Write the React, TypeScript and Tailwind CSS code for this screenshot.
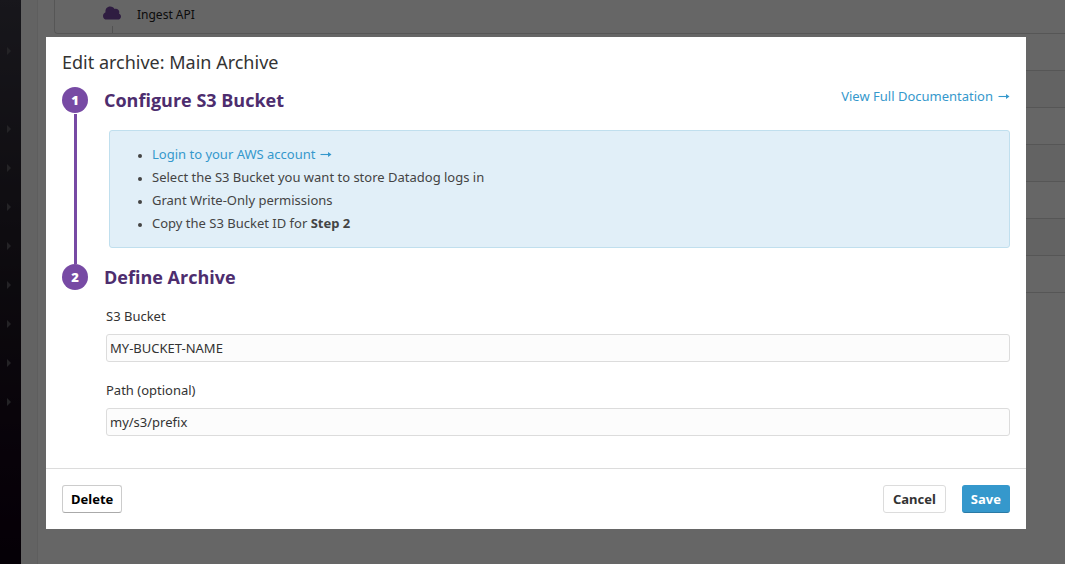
import React from 'react';

const navItems = [true, false, true, true, true, true, true, true, true, true];
const pipelineRows = [0, 1, 2, 3, 4, 5, 6];

function CloudIcon() {
  return (
    <svg className="w-[18px] h-[14px] shrink-0" viewBox="0 0 18 14" fill="#774aa4" aria-hidden="true">
      <path d="M4 13.6C1.5 13.6 0 12 0 9.9 0 8.2 1 6.9 2.5 6.2 2 2.8 4.2.4 7.2.4c2.1 0 3.6 1 4.4 2.5 2.2-.8 4.7.6 4.7 3 0 .6-.1 1-.4 1.5 1.3.5 2.1 1.6 2.1 3 0 1.9-1.4 3.2-3.3 3.2H4Z" />
    </svg>
  );
}

function Arrow() {
  return (
    <svg className="inline-block w-3 h-[9px] ml-[5px]" viewBox="0 0 12 9" fill="none" aria-hidden="true">
      <path d="M0.5 3.5H10" stroke="currentColor" strokeWidth="1.1" />
      <path d="M8 1L11.5 3.5 8 6Z" fill="currentColor" />
    </svg>
  );
}

function Backdrop() {
  return (
    <div className="flex min-h-screen bg-white" aria-hidden="true">
      <div className="w-[21px] shrink-0 pt-[31px] bg-linear-to-b from-[#3c3a46] via-[#201a24] to-[#0d0010]">
        {navItems.map((shown, i) => (
          <div key={i} className="flex h-[39px] items-center pl-[7px]">
            {shown && (
              <svg className="w-1 h-2" viewBox="0 0 4 8" fill="#5a5860">
                <path d="M0 0L4 4 0 8Z" />
              </svg>
            )}
          </div>
        ))}
      </div>
      <div className="w-[17px] shrink-0 border-r border-[#ececec] bg-[#f7f7f7]" />
      <div className="flex-1 pl-4">
        <div className="flex h-[34px] rounded-bl border-b border-l border-[#d8d8d8] pl-12">
          <div className="flex flex-col items-center">
            <div className="flex h-[26px] items-center">
              <CloudIcon />
            </div>
            <div className="w-px flex-1 bg-[#cccccc]" />
          </div>
          <span className="pt-[5px] pl-4 text-[12px] leading-5 text-[#222]">Ingest API</span>
        </div>
        {pipelineRows.map((i) => (
          <div key={i} className="h-[37px] border-b border-[#d8d8d8] even:bg-white odd:bg-[#f7f7f7]" />
        ))}
      </div>
    </div>
  );
}

function StepMarker({ n }: { n: number }) {
  return (
    <span className="flex size-[26px] shrink-0 items-center justify-center rounded-full bg-[#774aa4] pt-px font-['Open_Sans',sans-serif] text-[13px] font-extrabold text-white">
      {n}
    </span>
  );
}

function Field({ id, label, value }: { id: string; label: string; value: string }) {
  return (
    <div>
      <label htmlFor={id} className="block leading-5 text-[#333]">
        {label}
      </label>
      <input
        id={id}
        type="text"
        defaultValue={value}
        className="mt-2 block h-7 w-full rounded-[3px] border border-[#dcdcdc] bg-[#fcfcfc] px-[3px] text-[#333] outline-none"
      />
    </div>
  );
}

export default function App() {
  return (
    <div className="relative min-h-screen font-['Noto_Sans','Open_Sans',sans-serif] text-[13px]">
      <Backdrop />
      <div className="fixed inset-0 overflow-auto bg-black/60 pt-[37px] pr-[39px] pl-[46px]">
        <div role="dialog" aria-modal="true" aria-labelledby="title" className="bg-white">
          <div className="px-4 pt-3 pb-8">
            <h1 id="title" className="text-[18px] leading-[26px] text-[#333]">
              Edit archive: Main Archive
            </h1>

            <section className="mt-3 flex gap-4">
              <div className="flex flex-col items-center">
                <StepMarker n={1} />
                <div className="mt-px w-[3px] flex-1 bg-[#774aa4]" />
              </div>
              <div className="min-w-0 flex-1">
                <div className="flex justify-between">
                  <h2 className="font-['Open_Sans',sans-serif] text-[18px] leading-[26px] font-bold text-[#4d2d6e]">
                    Configure S3 Bucket
                  </h2>
                  <a href="#docs" className="leading-[18px] text-[#3598cc]">
                    View Full Documentation
                    <Arrow />
                  </a>
                </div>
                <div className="mt-[17px] mb-4 ml-[5px] rounded-[3px] border border-[#c0dfee] bg-[#e1eff8] py-3 pl-[42px]">
                  <ul className="list-disc leading-[23px] text-[#444] marker:text-[10px]">
                    <li>
                      <a href="#aws" className="text-[#3598cc]">
                        Login to your AWS account
                        <Arrow />
                      </a>
                    </li>
                    <li>Select the S3 Bucket you want to store Datadog logs in</li>
                    <li>Grant Write-Only permissions</li>
                    <li>
                      Copy the S3 Bucket ID for <strong>Step 2</strong>
                    </li>
                  </ul>
                </div>
              </div>
            </section>

            <section className="flex gap-4">
              <StepMarker n={2} />
              <div className="min-w-0 flex-1">
                <h2 className="font-['Open_Sans',sans-serif] text-[18px] leading-[26px] font-bold text-[#4d2d6e]">
                  Define Archive
                </h2>
                <div className="mt-4 ml-0.5 flex flex-col gap-[18px]">
                  <Field id="bucket" label="S3 Bucket" value="MY-BUCKET-NAME" />
                  <Field id="path" label="Path (optional)" value="my/s3/prefix" />
                </div>
              </div>
            </section>
          </div>

          <div className="flex items-center border-t border-[#dcdcdc] p-4 font-bold">
            <button type="button" className="h-7 rounded-[3px] border border-[#ccc] border-b-[#aaa] px-2 pt-px text-black">
              Delete
            </button>
            <div className="ml-auto flex gap-4">
              <button type="button" className="h-7 rounded-[3px] border border-[#dcdcdc] px-[9px] pt-px text-[#333]">
                Cancel
              </button>
              <button
                type="button"
                className="h-7 rounded-[3px] border border-[#3598cc] border-b-[#2a7aa5] bg-[#3598cc] px-2 pt-px text-white"
              >
                Save
              </button>
            </div>
          </div>
        </div>
      </div>
    </div>
  );
}
